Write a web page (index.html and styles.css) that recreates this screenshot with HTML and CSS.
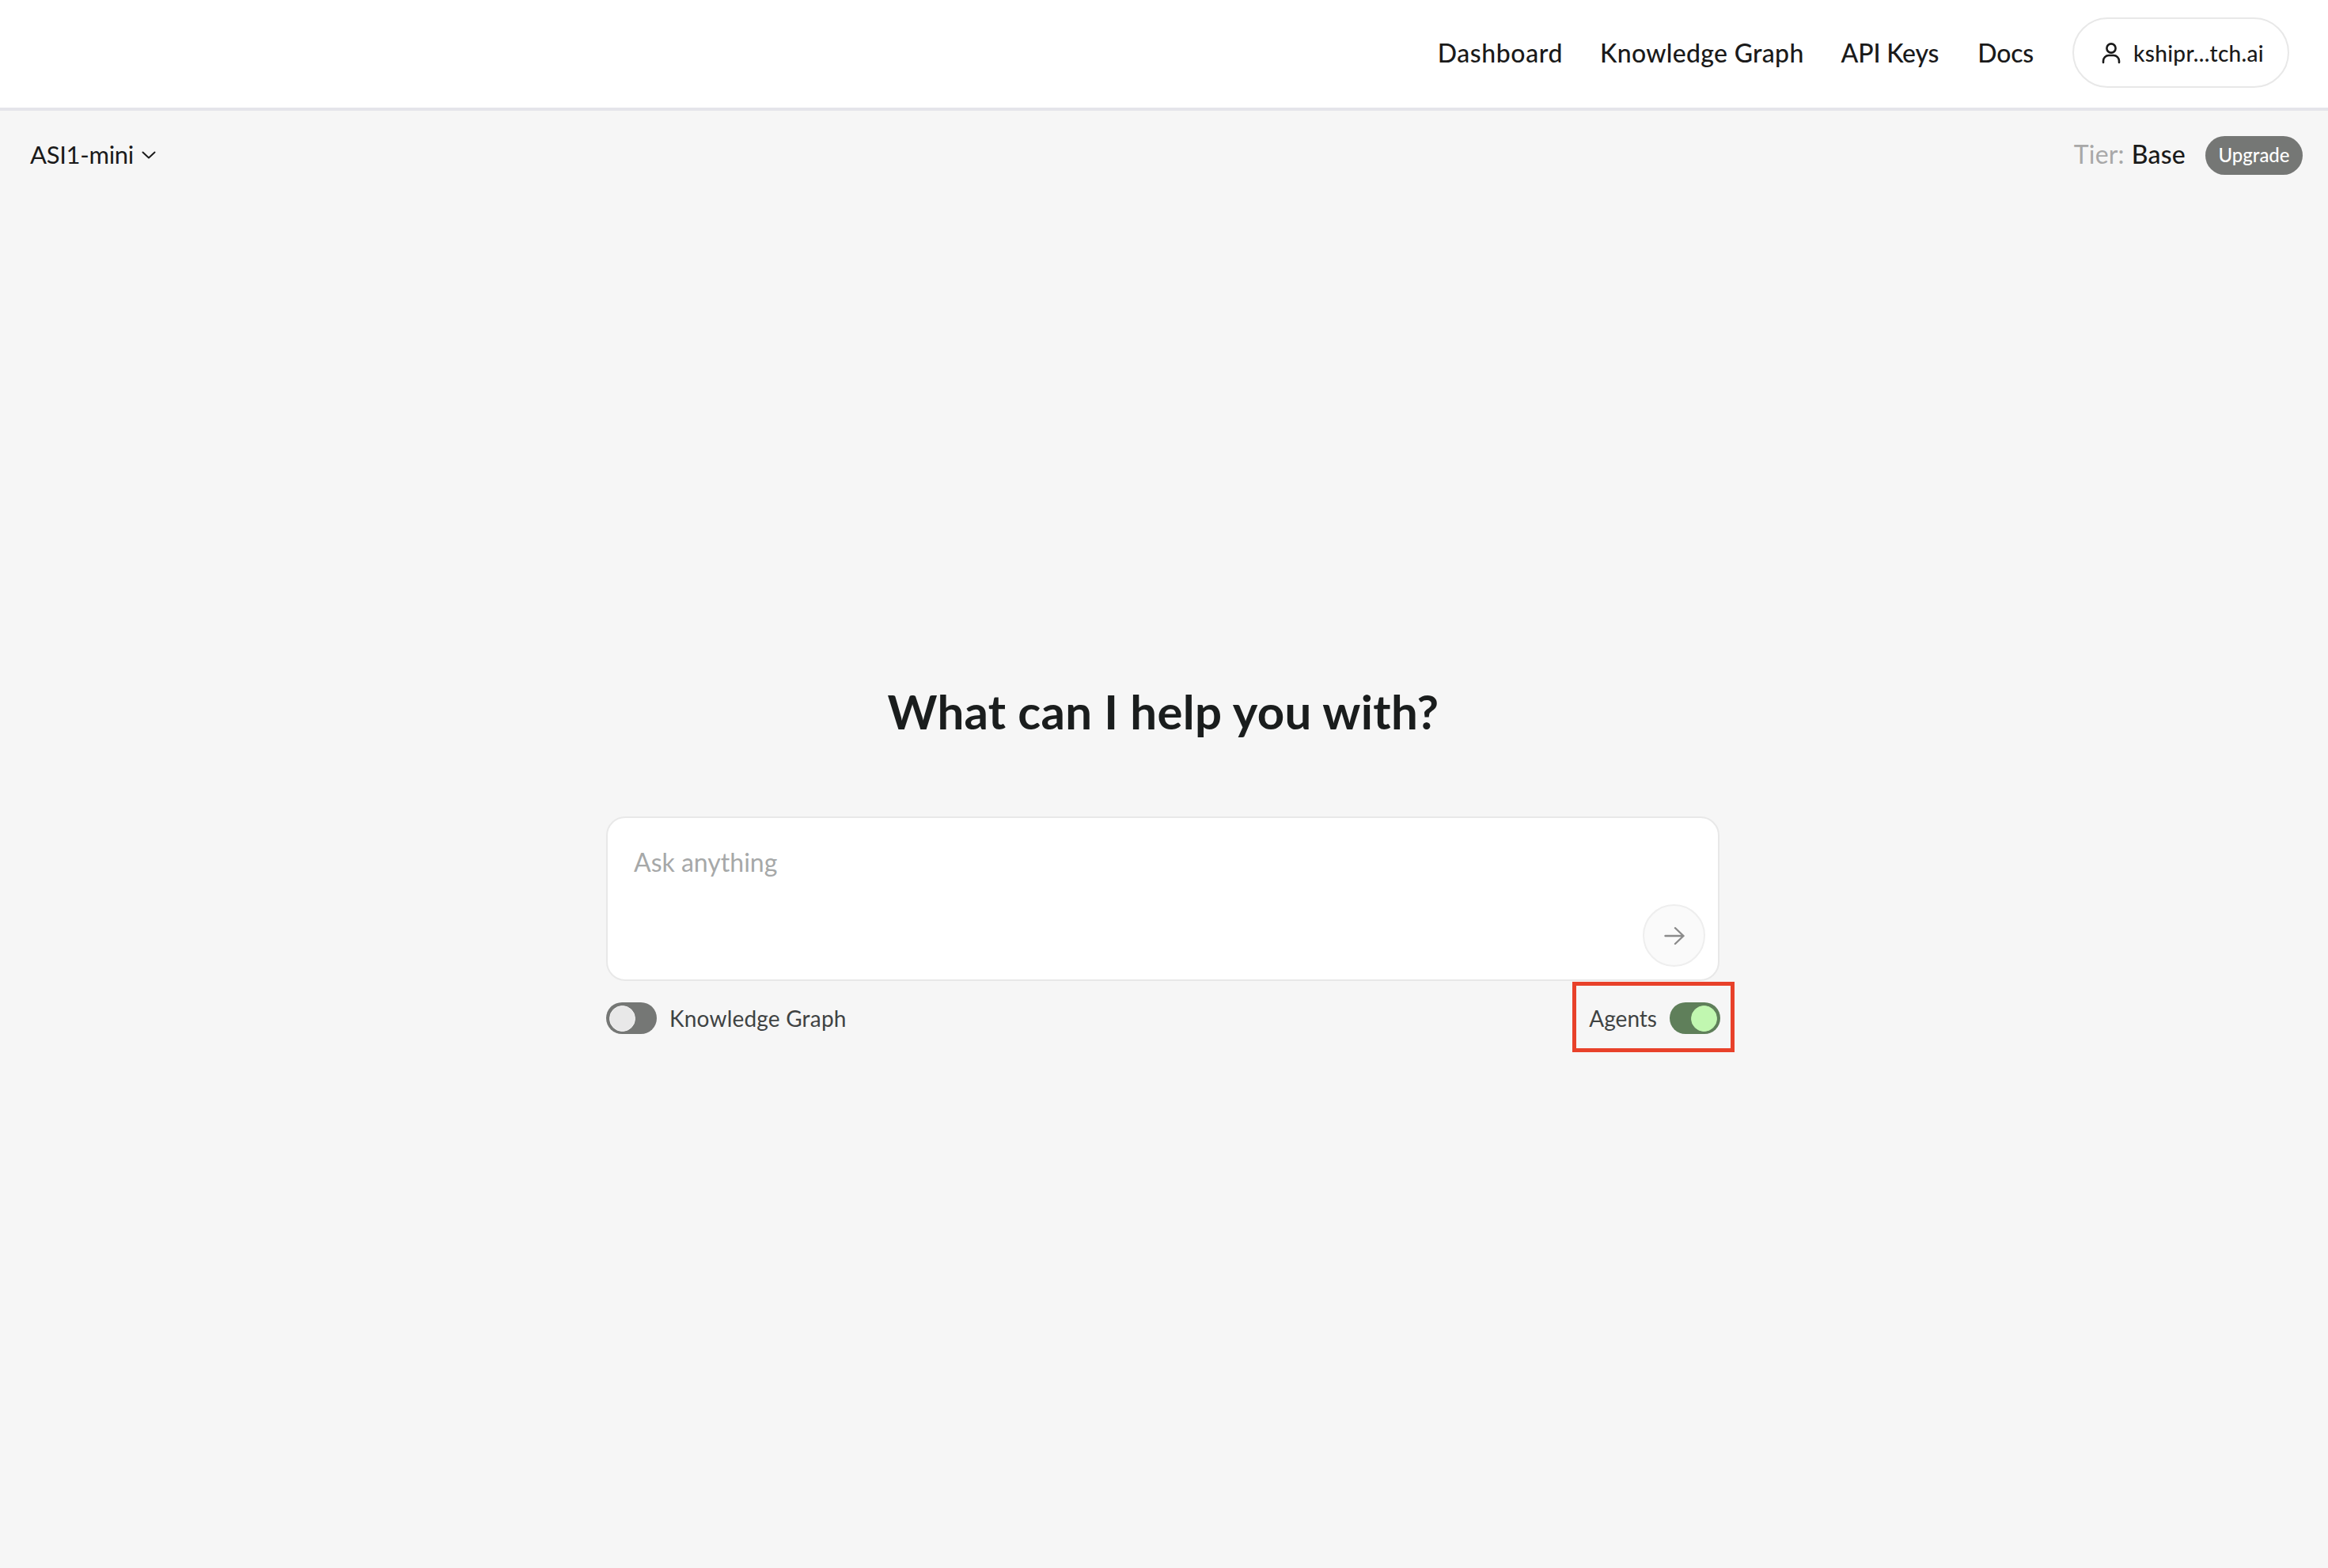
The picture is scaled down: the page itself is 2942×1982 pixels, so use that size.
FILE: index.html
```html
<!DOCTYPE html>
<html lang="en">
<head>
<meta charset="utf-8">
<title>ASI1</title>
<link rel="stylesheet" href="styles.css">
</head>
<body>
<header class="topbar">
  <nav class="nav">
    <a class="nav-link nav-link-wide">Dashboard</a>
    <a class="nav-link">Knowledge Graph</a>
    <a class="nav-link nav-link-tight">API Keys</a>
    <a class="nav-link nav-link-tight">Docs</a>
    <button class="account">
      <svg class="account-icon" viewBox="0 0 24 28" fill="none" stroke="#1a1a1a" stroke-width="2.6" stroke-linecap="round" stroke-linejoin="round"><circle cx="12" cy="8" r="5.6"/><path d="M2 26v-2a7 7 0 0 1 7-7h6a7 7 0 0 1 7 7v2"/></svg>
      <span>kshipr...tch.ai</span>
    </button>
  </nav>
</header>
<div class="subbar">
  <div class="model">
    <span class="raised">ASI1-mini</span>
    <svg class="chevron" viewBox="0 0 18 10" fill="none" stroke="#1a1a1a" stroke-width="2" stroke-linecap="round" stroke-linejoin="round"><path d="M1.5 1.5 9 8.5l7.5-7"/></svg>
  </div>
  <div class="tier">
    <span class="tier-label raised">Tier:</span>
    <span class="tier-value raised">Base</span>
    <span class="upgrade">Upgrade</span>
  </div>
</div>
<main class="main">
  <h1 class="title">What can I help you with?</h1>
  <div class="composer">
    <div class="placeholder">Ask anything</div>
    <div class="send-row">
      <button class="send">
        <svg class="send-icon" viewBox="0 0 26 24" fill="none" stroke="#8a8a8a" stroke-width="2.4" stroke-linecap="round" stroke-linejoin="round"><path d="M1.5 12h23M14 2l10.5 10L14 22"/></svg>
      </button>
    </div>
  </div>
  <div class="options">
    <div class="option">
      <span class="switch"><span class="knob"></span></span>
      <span class="option-label">Knowledge Graph</span>
    </div>
    <div class="option agents">
      <span class="option-label">Agents</span>
      <span class="switch switch-on"><span class="knob knob-on"></span></span>
      <span class="highlight"></span>
    </div>
  </div>
</main>
</body>
</html>
```
FILE: styles.css
```css
* { box-sizing: border-box; }
html, body { margin: 0; padding: 0; height: 100%; }
body {
  background: #f6f6f6;
  color: #1a1a1a;
  font-family: "Lato", "Liberation Sans", sans-serif;
  min-height: 1982px;
}
.topbar {
  height: 140px;
  background: #fff;
  border-bottom: 4px solid #e5e5ea;
  display: flex;
  justify-content: flex-end;
  align-items: center;
  padding: 0 49px 3px 0;
}
.nav { display: flex; align-items: center; gap: 47px; }
.nav-link { font-size: 32px; font-weight: 500; color: #1a1a1a; letter-spacing: 0.3px; }
.nav-link-wide { letter-spacing: 0.6px; }
.nav-link-tight { letter-spacing: -0.2px; margin-right: 2px; }
.account {
  height: 89px;
  width: 274px;
  border: 2px solid #e8e8e8;
  border-radius: 45px;
  background: #fff;
  display: flex;
  align-items: center;
  justify-content: center;
  gap: 16px;
  font: 500 28px "Lato", sans-serif;
  letter-spacing: 0.3px;
  color: #1a1a1a;
  padding: 0 0 0 5px;
}
.account-icon { width: 24px; height: 28px; }
.subbar {
  display: flex;
  justify-content: space-between;
  align-items: center;
  height: 112px;
  padding: 0 32px 0 38px;
}
.raised { margin-bottom: 3px; }
.model { display: flex; align-items: center; gap: 10px; font-size: 31px; letter-spacing: -0.3px; }
.chevron { width: 18px; height: 10px; }
.tier { display: flex; align-items: center; font-size: 32px; }
.tier-label { color: #a8a8a8; margin-right: 9px; letter-spacing: 0.2px; }
.tier-value { margin-right: 25px; font-weight: 500; letter-spacing: 0.2px; }
.upgrade {
  background: #757775;
  color: #fff;
  font-size: 24px;
  font-weight: 500;
  height: 49px;
  width: 123px;
  border-radius: 25px;
  display: flex;
  align-items: center;
  justify-content: center;
  padding-bottom: 2px;
}
.main {
  width: 1408px;
  margin-left: 766px;
  padding-top: 611px;
}
.title {
  margin: 0;
  text-align: center;
  font-size: 60px;
  font-weight: 700;
  line-height: 72px;
  letter-spacing: 0.3px;
  color: #1a1d1d;
}
.composer {
  margin-top: 97px;
  margin-right: 1px;
  height: 208px;
  background: #fff;
  border: 2px solid #e8e8e8;
  border-radius: 24px;
  padding: 37px 16px 16px 33px;
  display: flex;
  flex-direction: column;
  justify-content: space-between;
}
.placeholder { font-size: 32px; line-height: 38px; color: #a6a8a8; }
.send-row { display: flex; justify-content: flex-end; }
.send {
  width: 79px;
  height: 79px;
  border-radius: 50%;
  border: 2px solid #eeeeee;
  background: #fafafa;
  display: flex;
  align-items: center;
  justify-content: center;
  padding: 0;
}
.send-icon { width: 26px; height: 24px; }
.options {
  margin-top: 27px;
  display: flex;
  justify-content: space-between;
  align-items: center;
  height: 40px;
}
.option { display: flex; align-items: center; gap: 16px; position: relative; }
.option-label { font-size: 28px; letter-spacing: 0.2px; color: #3f4343; }
.agents .option-label { letter-spacing: 0; }
.switch {
  width: 64px;
  height: 40px;
  border-radius: 20px;
  background: #757775;
  display: flex;
  align-items: center;
  padding: 0 4px;
}
.switch-on { background: #5f7f5a; justify-content: flex-end; }
.knob {
  width: 33px;
  height: 33px;
  border-radius: 50%;
  background: #e8e8e8;
  border: 1px solid #f4f4f4;
}
.knob-on { background: #c1f7b0; border-color: #c1f7b0; }
.highlight {
  position: absolute;
  top: -26px;
  bottom: -23px;
  left: -21px;
  right: -18px;
  border: 5px solid #e8412a;
  pointer-events: none;
}
```
